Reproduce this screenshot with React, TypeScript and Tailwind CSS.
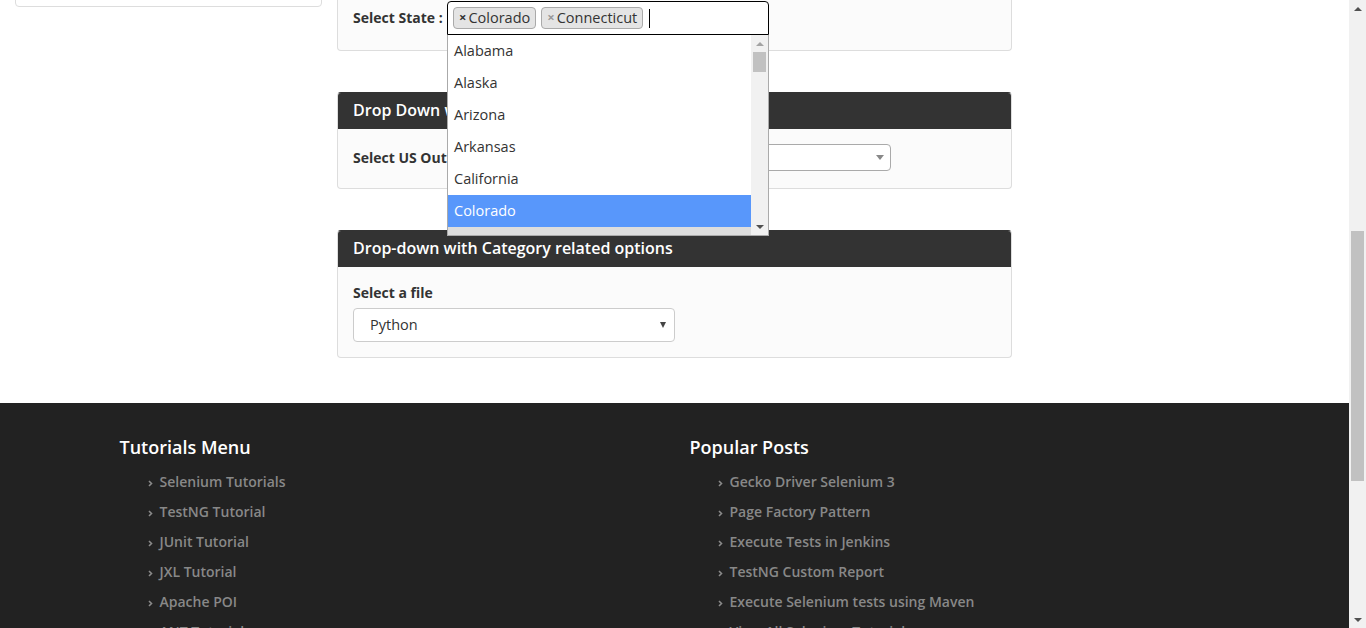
import { useLayoutEffect, useRef } from "react";

const states = [
  "Alabama", "Alaska", "Arizona", "Arkansas", "California", "Colorado", "Connecticut", "Delaware",
  "District Of Columbia", "Florida", "Georgia", "Hawaii", "Idaho", "Illinois", "Indiana", "Iowa",
];

const tutorials = [
  "Selenium Tutorials", "TestNG Tutorial", "JUnit Tutorial", "JXL Tutorial", "Apache POI",
  "ANT Tutorial", "Jenkins Tutorial", "Maven Tutorial",
];

const posts = [
  "Gecko Driver Selenium 3", "Page Factory Pattern", "Execute Tests in Jenkins",
  "TestNG Custom Report", "Execute Selenium tests using Maven", "View All Selenium Tutorials",
];

const font = "font-['Open_Sans',_'Liberation_Sans',_sans-serif]";

function Panel({ title, children, bodyClass }: { title: string; children: React.ReactNode; bodyClass: string }) {
  return (
    <div className="mb-[41px] rounded-[4px] border border-[#ddd] border-t-[#333] bg-[#fbfbfb]">
      <div className="flex h-[36px] items-center rounded-t-[3px] bg-[#333] pb-[2px] pl-[15px] text-[16px] font-semibold text-white">
        {title}
      </div>
      <div className={bodyClass}>{children}</div>
    </div>
  );
}

function Chevron() {
  return (
    <svg width="5" height="7" viewBox="0 0 5 7" className="mr-[7px] mt-[5px] shrink-0">
      <path d="M1 1 L3.5 3.5 L1 6" fill="none" stroke="#8a8a8a" strokeWidth="1.6" />
    </svg>
  );
}

function LinkList({ items }: { items: string[] }) {
  return (
    <ul className="ml-[28px]">
      {items.map((t) => (
        <li key={t} className="flex h-[30px] items-center text-[14px] font-semibold text-[#888]">
          <Chevron />
          {t}
        </li>
      ))}
    </ul>
  );
}

function UpArrow({ color }: { color: string }) {
  return (
    <div className="flex h-[17px] items-center justify-center">
      <span className={`h-0 w-0 border-x-[4px] border-b-[4px] border-x-transparent ${color}`} />
    </div>
  );
}

function DownArrow({ color }: { color: string }) {
  return (
    <div className="flex h-[17px] items-center justify-center">
      <span className={`h-0 w-0 border-x-[4px] border-t-[4px] border-x-transparent ${color}`} />
    </div>
  );
}

export default function App() {
  const scroller = useRef<HTMLDivElement>(null);

  useLayoutEffect(() => {
    if (scroller.current) scroller.current.scrollTop = 537;
  }, []);

  return (
    <div className={`flex h-[628px] w-full bg-white text-[14px] text-[#333] ${font}`}>
      <div ref={scroller} className="h-[628px] w-[1349px] shrink-0 overflow-hidden">
        {/* Top navigation */}
        <div className="flex h-[50px] items-center bg-[#222] px-[15px] text-[18px] font-bold text-white">
          Selenium Easy
        </div>

        <div className="flex pt-[20px]">
          {/* Sidebar */}
          <div className="w-[337px] shrink-0 px-[15px]">
            <div className="h-[474px] overflow-hidden rounded-[4px] border border-[#ddd] bg-white">
              <div className="bg-[#333] px-[15px] py-[8px] font-semibold text-white">List Box</div>
              <ul className="px-[15px] py-[10px] leading-[30px]">
                <li>Bootstrap List Box</li>
                <li>JQuery List Box</li>
                <li>Data List Filter</li>
                <li>Select Dropdown List</li>
                <li>JQuery Select dropdown</li>
              </ul>
            </div>
          </div>

          {/* Main column */}
          <div className="w-[675px] shrink-0">
            <div className="mb-[41px] h-[375px] overflow-hidden">
              <h2 className="mb-[10px] text-[24px] font-semibold">JQuery Select dropdown</h2>
              <p className="leading-[20px]">
                This page demonstrates single and multi select drop downs built with Select2, with search,
                disabled and category related options.
              </p>
            </div>

            <Panel title="Drop Down with Multi select" bodyClass="flex h-[64px] items-start pl-[15px] pt-[15px]">
              <div className="flex h-[32px] w-[94px] items-center font-bold">Select State :</div>
              <div className="relative w-[322px]">
                <div className="flex h-[34px] items-start rounded-t-[4px] border border-black bg-white text-[14.5px]">
                  <span className="ml-[5px] mt-[5px] flex h-[22px] items-center rounded-[4px] border border-[#aaa] bg-[#e4e4e4] px-[5px]">
                    <span className="mr-[2px] text-[13px] font-bold text-[#333]">×</span>Colorado
                  </span>
                  <span className="ml-[5px] mt-[5px] flex h-[22px] items-center rounded-[4px] border border-[#aaa] bg-[#e4e4e4] px-[5px]">
                    <span className="mr-[2px] text-[13px] font-bold text-[#999]">×</span>Connecticut
                  </span>
                  <span className="ml-[6px] mt-[7px] h-[19px] w-px bg-black" />
                </div>
                <div className="absolute left-0 top-[34px] z-10 flex h-[201px] w-[322px] border border-t-0 border-[#aaa] bg-white text-[14.5px]">
                  <ul className="h-[200px] flex-1 overflow-hidden">
                    {states.map((s) => (
                      <li
                        key={s}
                        className={`h-[32px] px-[6px] leading-[32px] ${
                          s === "Colorado" ? "bg-[#5897fb] text-white" : s === "Connecticut" ? "bg-[#ddd]" : ""
                        }`}
                      >
                        {s}
                      </li>
                    ))}
                  </ul>
                  <div className="flex h-[200px] w-[17px] flex-col justify-between bg-[#f1f1f1]">
                    <div>
                      <UpArrow color="border-b-[#a3a3a3]" />
                      <div className="mx-[2px] h-[20px] bg-[#c1c1c1]" />
                    </div>
                    <DownArrow color="border-t-[#505050]" />
                  </div>
                </div>
              </div>
            </Panel>

            <Panel title="Drop Down with Search box" bodyClass="flex h-[59px] items-center pb-[2px] pl-[15px]">
              <div className="w-[238px] font-bold">Select US Outlying Territories :</div>
              <div className="flex h-[27px] w-[300px] items-center justify-end rounded-[4px] border border-[#aaa] bg-white pr-[6px]">
                <span className="h-0 w-0 border-x-[4px] border-t-[5px] border-x-transparent border-t-[#888]" />
              </div>
            </Panel>

            <Panel title="Drop-down with Category related options" bodyClass="h-[90px] px-[15px] pt-[16px]">
              <div className="mb-[5px] h-[20px] font-bold leading-[20px]">Select a file</div>
              <div className="flex h-[34px] w-[322px] items-center justify-between rounded-[4px] border border-[#ccc] bg-white pl-[16px] pr-[8px] text-[14.5px]">
                <span>Python</span>
                <span className="h-0 w-0 border-x-[3px] border-t-[6px] border-x-transparent border-t-[#444]" />
              </div>
            </Panel>
          </div>
        </div>

        {/* Footer */}
        <footer className="mt-[4px] h-[552px] overflow-hidden bg-[#222]">
          <div className="mx-auto flex w-[1170px] pt-[34px]">
            <div className="w-[585px] pl-[30px]">
              <h3 className="mb-[9px] text-[18px] font-semibold leading-[20px] text-white">Tutorials Menu</h3>
              <LinkList items={tutorials} />
            </div>
            <div className="w-[585px] pl-[15px]">
              <h3 className="mb-[9px] text-[18px] font-semibold leading-[20px] text-white">Popular Posts</h3>
              <LinkList items={posts} />
            </div>
          </div>
          <div className="mt-[50px] border-t border-[#333] py-[20px] text-center text-[13px] text-[#777]">
            © Selenium Easy. All rights reserved.
          </div>
        </footer>
      </div>

      {/* Page scrollbar */}
      <div className="flex h-[628px] w-[17px] shrink-0 flex-col justify-between bg-[#f1f1f1]">
        <div>
          <UpArrow color="border-b-[#505050]" />
          <div className="mx-[2px] mt-[214px] h-[250px] bg-[#c1c1c1]" />
        </div>
        <DownArrow color="border-t-[#505050]" />
      </div>
    </div>
  );
}
